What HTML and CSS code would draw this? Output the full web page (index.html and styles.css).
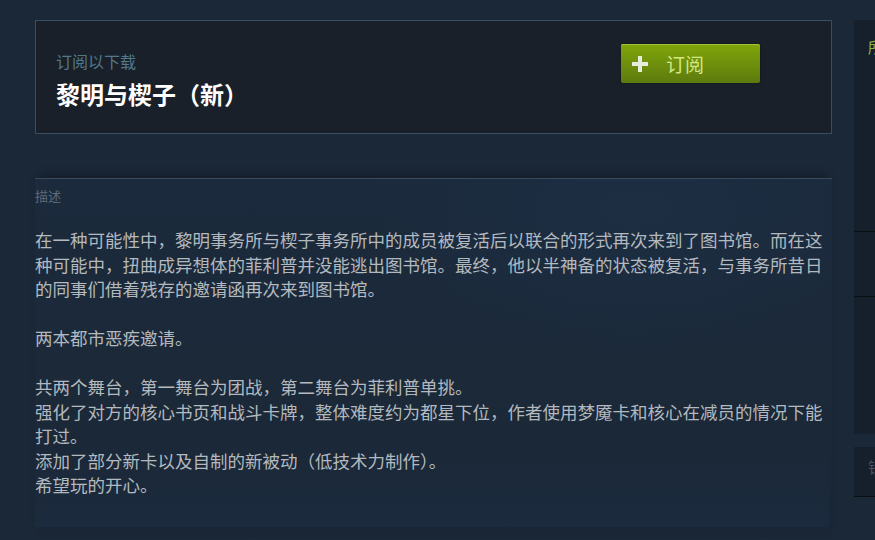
FILE: index.html
```html
<!doctype html>
<html lang="zh-CN">

<head>
    <meta charset="utf-8">
    <title>黎明与楔子（新）</title>
    <link rel="stylesheet" href="styles.css">
</head>

<body>
    <div id="page">
        <div id="main">
            <div class="subscribe">
                <div class="sub-text">
                    <div class="sub-label">订阅以下载</div>
                    <div class="sub-title">黎明与楔子（新）</div>
                </div>
                <button class="btn-subscribe" type="button">
                    <span class="plus">
                        <svg width="16" height="16" viewBox="0 0 16 16">
                            <path d="M6 0h4v6h6v4h-6v6h-4v-6h-6v-4h6z" fill="#e6eadf"/>
                        </svg>
                    </span>
                    <span class="btn-label">订阅</span>
                </button>
            </div>

            <div class="desc">
                <div class="desc-head">描述</div>
                <div class="desc-body">
                    在一种可能性中，黎明事务所与楔子事务所中的成员被复活后以联合的形式再次来到了图书馆。而在这种可能中，扭曲成异想体的菲利普并没能逃出图书馆。最终，他以半神备的状态被复活，与事务所昔日的同事们借着残存的邀请函再次来到图书馆。<br>
                    <br>
                    两本都市恶疾邀请。<br>
                    <br>
                    共两个舞台，第一舞台为团战，第二舞台为菲利普单挑。<br>
                    强化了对方的核心书页和战斗卡牌，整体难度约为都星下位，作者使用梦魇卡和核心在减员的情况下能打过。<br>
                    添加了部分新卡以及自制的新被动（低技术力制作）。<br>
                    希望玩的开心。
                </div>
            </div>
        </div>

        <div id="side">
            <div class="side-block">
                <div class="side-title">所</div>
                <div class="side-row"></div>
                <div class="side-row last"></div>
            </div>
            <div class="side-block second">
                <div class="side-muted">钱</div>
            </div>
        </div>
    </div>
</body>

</html>
```

FILE: styles.css
```css
html, body {
    margin: 0;
    padding: 0;
    background: #1b2838;
    overflow: hidden;
}

body {
    font-family: "Noto Sans CJK SC", "Noto Sans", sans-serif;
    color: #acb2b8;
    width: 875px;
    height: 540px;
}

#page {
    display: flex;
    gap: 22px;
    padding: 20px 0 0 35px;
}

#main {
    width: 797px;
    flex: none;
}

.subscribe {
    display: flex;
    justify-content: space-between;
    align-items: flex-start;
    height: 112px;
    background: #1a2029;
    border: 1px solid #3b4d60;
    padding: 0 71px 0 20px;
}

.sub-text {
    padding-top: 29px;
}

.sub-label {
    font-size: 16px;
    line-height: 22px;
    color: #52788a;
}

.sub-title {
    font-size: 24px;
    line-height: 30px;
    font-weight: bold;
    color: #ffffff;
    margin-top: 7px;
}

.btn-subscribe {
    margin-top: 23px;
    width: 139px;
    height: 39px;
    display: flex;
    align-items: center;
    gap: 18px;
    padding: 0 0 0 11px;
    border: none;
    border-radius: 2px;
    background: linear-gradient(to bottom, #7ea40a 5%, #5e7c0e 95%);
    box-shadow: inset 0 1px 0 #a4c23a, 0 0 2px rgba(0, 0, 0, 0.5);
    cursor: pointer;
}

.plus {
    display: flex;
}

.btn-label {
    font-family: "Noto Sans CJK SC", sans-serif;
    font-size: 19px;
    color: #d2e885;
}

.desc {
    margin-top: 44px;
    padding-bottom: 40px;
    border-top: 1px solid #3a4b5d;
    background:
        linear-gradient(to bottom, rgba(28, 44, 64, 0) 0, rgba(30, 52, 80, 0.3) 100%) 0 258px / 794px 90px no-repeat,
        radial-gradient(ellipse 380px 220px at 600px 30px, rgba(34, 58, 88, 0.25), transparent 70%),
        linear-gradient(to bottom, #1b2a3c 0, #1b2939 200px, #1a2635 360px);
    box-shadow: 0 -8px 8px -4px rgba(0, 0, 0, 0.25);
}

.desc-head {
    font-size: 13px;
    line-height: 18px;
    color: #5b6a79;
    padding-top: 8px;
}

.desc-body {
    margin-top: 23px;
    font-size: 17.5px;
    line-height: 24.5px;
    color: #b3b9bf;
}

#side {
    width: 200px;
    flex: none;
}

.side-block {
    background: #16202c;
}

.side-title {
    font-size: 15px;
    color: #8ab63a;
    padding: 16px 0 0 14px;
    height: 195px;
    border-bottom: 1px solid #0a0f14;
}

.side-row {
    height: 64px;
    border-bottom: 1px solid #0a0f14;
}

.side-row.last {
    height: 137px;
    border-bottom: none;
}

.side-block.second {
    margin-top: 13px;
}

.side-muted {
    font-size: 15px;
    color: #4c545c;
    padding: 9px 0 0 14px;
    height: 40px;
    border-bottom: 1px solid #0a0f14;
}
```
